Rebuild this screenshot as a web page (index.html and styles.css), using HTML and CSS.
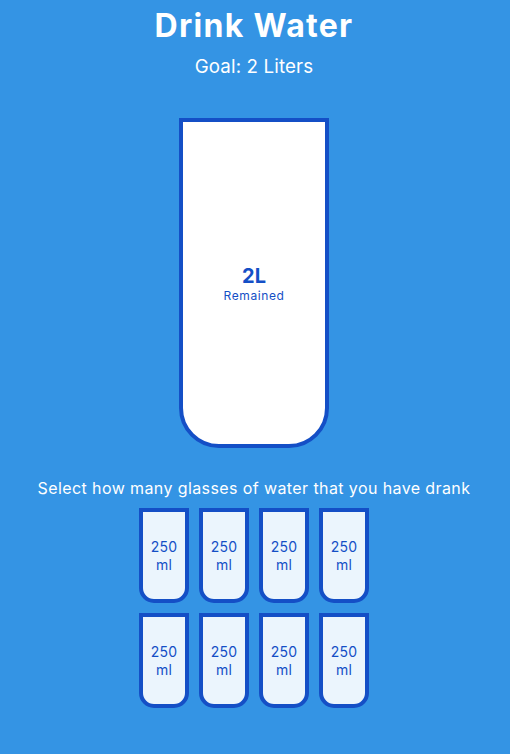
FILE: index.html
```html
<!DOCTYPE html>
<html lang="en">
<head>
<meta charset="UTF-8">
<title>Drink Water</title>
<link rel="stylesheet" href="styles.css">
</head>
<body>
  <h1 class="title">Drink Water</h1>
  <h3 class="goal">Goal: 2 Liters</h3>
  <div class="cup">
    <div class="remained">
      <span class="liters">2L</span>
      <small class="remained-label">Remained</small>
    </div>
  </div>
  <p class="text">Select how many glasses of water that you have drank</p>
  <div class="cups">
    <div class="cup-small">250<br>ml</div>
    <div class="cup-small">250<br>ml</div>
    <div class="cup-small">250<br>ml</div>
    <div class="cup-small">250<br>ml</div>
    <div class="cup-small">250<br>ml</div>
    <div class="cup-small">250<br>ml</div>
    <div class="cup-small">250<br>ml</div>
    <div class="cup-small">250<br>ml</div>
  </div>
</body>
</html>
```
FILE: styles.css
```css
* { box-sizing: border-box; }
html, body { height: 100%; }
body {
  margin: 0;
  padding-right: 2px;
  background-color: #3494e4;
  color: #fff;
  font-family: "Inter", "DejaVu Sans", sans-serif;
  display: flex;
  flex-direction: column;
  align-items: center;
}
.title {
  margin: 6px 0 0;
  font-size: 32px;
  line-height: 39px;
  font-weight: 700;
  letter-spacing: 1.3px;
}
.goal {
  margin: 10px 0;
  font-size: 18.72px;
  line-height: 23px;
  font-weight: 400;
  letter-spacing: 0.15px;
}
.cup {
  background-color: #fff;
  border: 4px solid #144fc6;
  color: #144fc6;
  border-radius: 0 0 40px 40px;
  height: 330px;
  width: 150px;
  margin: 30px 0;
  display: flex;
  flex-direction: column;
  overflow: hidden;
}
.remained {
  flex: 1;
  display: flex;
  flex-direction: column;
  align-items: center;
  justify-content: center;
  text-align: center;
}
.liters { font-size: 20px; font-weight: 700; line-height: 24px; }
.remained-label { font-size: 12px; line-height: 15px; letter-spacing: 0.6px; }
.text {
  margin: 0 0 5px;
  font-size: 16px;
  line-height: 20px;
  text-align: center;
  letter-spacing: 0.4px;
}
.cups {
  display: flex;
  flex-wrap: wrap;
  justify-content: center;
  align-items: center;
  width: 280px;
}
.cup-small {
  width: 50px;
  height: 95px;
  margin: 5px;
  border: 4px solid #144fc6;
  border-radius: 0 0 15px 15px;
  background-color: rgba(255, 255, 255, 0.9);
  color: #144fc6;
  font-size: 14px;
  line-height: 18px;
  display: flex;
  align-items: center;
  justify-content: center;
  text-align: center;
  letter-spacing: 0.2px;
}
```
